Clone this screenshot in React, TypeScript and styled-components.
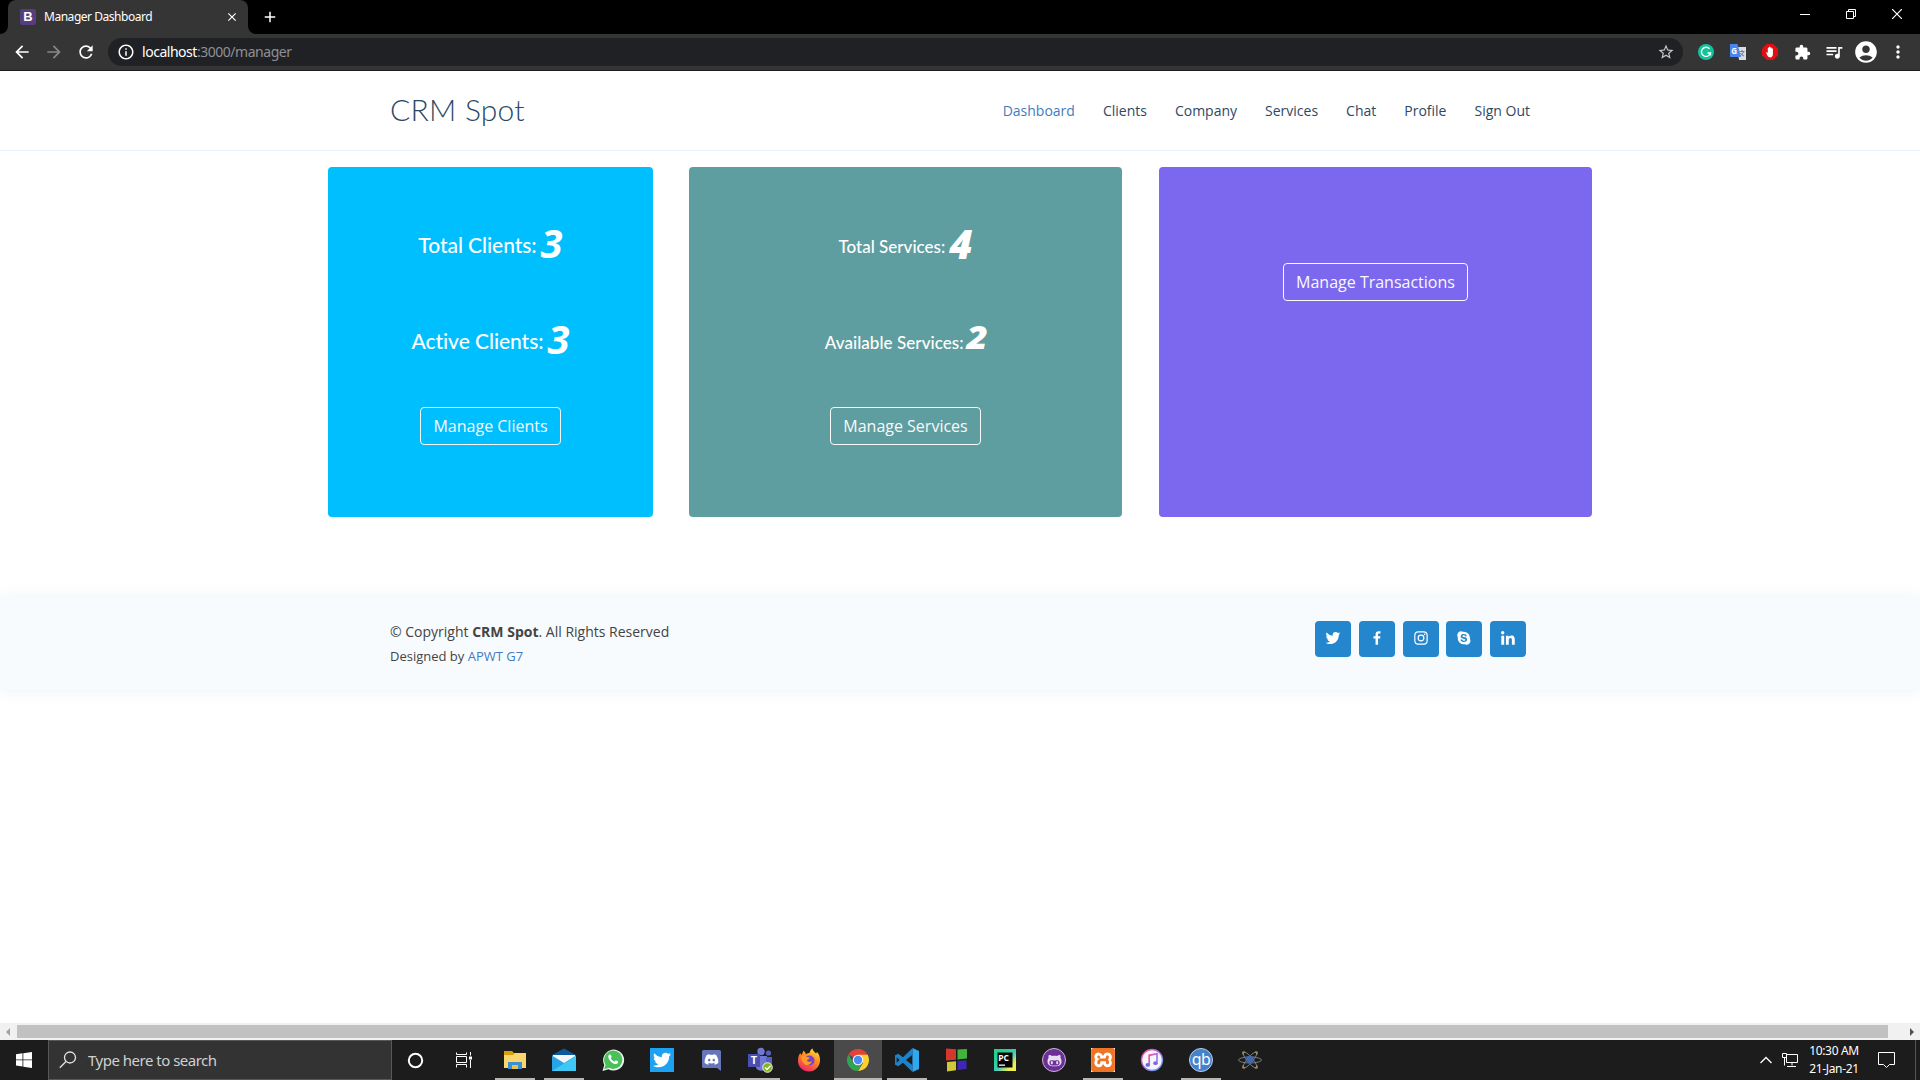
import React from "react";
import styled, { createGlobalStyle } from "styled-components";
import {
  MdArrowBack, MdArrowForward, MdRefresh, MdInfoOutline, MdStarBorder, MdExtension,
  MdQueueMusic, MdAccountCircle, MdMoreVert, MdClose, MdAdd,
} from "react-icons/md";
import { BiLogoTwitter, BiLogoFacebook, BiLogoInstagram, BiLogoSkype, BiLogoLinkedin } from "react-icons/bi";
import { FaTwitter, FaDiscord, FaGithubAlt } from "react-icons/fa";
import { SiXampp } from "react-icons/si";

const UI = `"Noto Sans", "Open Sans", sans-serif`;
const BODY = `"Open Sans", "Noto Sans", sans-serif`;
const HEAD = `Lato, "Open Sans", sans-serif`;

const Global = createGlobalStyle`
  * { box-sizing: border-box; }
  html, body { margin: 0; padding: 0; background: #fff; overflow: hidden; }
  a { text-decoration: none; color: inherit; }
  svg { display: block; flex: none; }
`;

const Screen = styled.div`
  width: 1920px; height: 1080px; display: flex; flex-direction: column; overflow: hidden;
  font-family: ${BODY}; color: #444;
`;

/* browser window */
const TabStrip = styled.div`
  height: 34px; flex: none; background: #000; display: flex; color: #fff; justify-content: space-between;
`;
const TabGroup = styled.div`display: flex; align-items: flex-end;`;
const TabFlare = styled.svg`width: 8px; height: 8px; fill: #353535;`;
const Tab = styled.div`
  width: 240px; height: 34px; background: #353535; border-radius: 8px 8px 0 0;
  display: flex; align-items: center; padding: 0 9px 0 12px;
`;
const Favicon = styled.span`
  width: 16px; height: 16px; border-radius: 2px; background: #563d7c; color: #fff;
  font: 700 13px/16px "Liberation Sans", sans-serif; text-align: center;
`;
const TabTitle = styled.span`
  flex: 1; margin-left: 8px; font: 400 12px/16px ${UI}; letter-spacing: -0.47px; white-space: nowrap;
`;
const NewTab = styled.div`height: 34px; display: flex; align-items: center; margin-left: 5px;`;
const WindowControls = styled.div`
  display: flex; align-items: center; gap: 36px; padding: 0 18px 6px 0;
`;
const Toolbar = styled.div`
  height: 37px; flex: none; background: #353535; border-bottom: 1px solid #1d1b1f;
  display: flex; align-items: center; padding: 0 12px; color: #fff;
`;
const NavButtons = styled.div`display: flex; gap: 12px; width: 96px;`;
const NavIcon = styled.span<{ $dim?: boolean }>`
  display: flex; font-size: 20px; color: ${(p) => (p.$dim ? "#888" : "#fff")};
`;
const Omnibox = styled.div`
  width: 1575px; height: 28px; border-radius: 14px; background: #202124; display: flex;
  align-items: center; padding: 0 8px 0 9px; font: 400 14px/20px ${UI};
`;
const Url = styled.span`
  flex: 1; margin-left: 7px; color: #8d9094; white-space: nowrap; letter-spacing: -0.47px;
  b { font-weight: 400; color: #fff; }
`;
const Extensions = styled.div`
  flex: 1; display: flex; justify-content: space-between; align-items: center; padding-left: 13px;
`;
const Slot = styled.span<{ $w?: number }>`
  width: ${(p) => p.$w ?? 20}px; height: 22px; display: flex; align-items: center; justify-content: center;
`;

/* page */
const Page = styled.main`flex: 1; display: flex; flex-direction: column; background: #fff;`;
const Header = styled.header`
  height: 80px; border-bottom: 1px solid #e6f1f8; display: flex; align-items: center;
  justify-content: space-between; padding: 0 390px;
`;
const Logo = styled.h1`
  margin: -3px 0 0; font: 300 30px/40px ${HEAD}; letter-spacing: 0.25px; color: #2c4964; white-space: nowrap;
`;
const Menu = styled.nav`display: flex; gap: 28px;`;
const MenuLink = styled.a<{ $active?: boolean }>`
  font-size: 14px; line-height: 20px; white-space: nowrap; color: ${(p) => (p.$active ? "#437bbf" : "#2c4964")};
`;
const Cards = styled.section`
  display: grid; grid-template-columns: 325px 434px 433px; column-gap: 36px; padding: 16px 328px 0;
`;
const Card = styled.article<{ $color: string; $width: number; $top: number }>`
  width: ${(p) => p.$width}px; height: 350px; border-radius: 4px; background: ${(p) => p.$color};
  padding-top: ${(p) => p.$top}px; display: flex; flex-direction: column; align-items: center; color: #fff;
`;
const Stat = styled.div<{ $size: number; $spacing: number; $drop?: number }>`
  height: 56px; margin-bottom: 40px; display: flex; align-items: center; white-space: nowrap;
  padding-top: ${(p) => (p.$drop ?? 0) * 2}px;
  font: 500 ${(p) => p.$size}px/52px ${HEAD}; letter-spacing: ${(p) => p.$spacing}px;
`;
const StatValue = styled.em<{ $size: number; $weight: number; $shift: number; $stretch?: number }>`
  margin-left: 4px; font: italic ${(p) => p.$weight} ${(p) => p.$size}px/52px ${BODY}; letter-spacing: 0;
  transform: translateY(${(p) => p.$shift}px) scaleX(${(p) => p.$stretch ?? 1});
`;
const CardButton = styled.a<{ $flush?: boolean }>`
  height: 38px; margin-top: ${(p) => (p.$flush ? 0 : -2)}px; border: 1px solid #f8f9fa; border-radius: 4px; padding: 0 12px;
  font-size: 16px; line-height: 36px; color: #f8f9fa; white-space: nowrap;
`;
const Footer = styled.footer`
  margin-top: 79px; height: 93px; background: #f7fbfe; box-shadow: 0 2px 15px rgba(44, 73, 100, 0.08);
  display: flex; justify-content: space-between; padding: 25px 393.8px 0 390px;
`;
const Legal = styled.div`font-size: 14px; line-height: 21px; white-space: nowrap;`;
const Credits = styled.div`
  padding-top: 4px; font-size: 13px; line-height: 20px;
  a { color: #437bbf; }
`;
const Socials = styled.div`display: flex; gap: 7.75px;`;
const Social = styled.a`
  width: 36px; height: 36px; border-radius: 4px; background: #2487ce; color: #fff; font-size: 18px;
  display: flex; align-items: center; justify-content: center; padding-bottom: 2px;
`;
const ScrollBar = styled.div`
  height: 17px; flex: none; background: #f1f1f1; display: flex; align-items: center; padding: 0 6px;
`;
const Thumb = styled.div`width: 1871px; height: 13px; background: #c1c1c1; margin: 0 22px 0 7px;`;

/* taskbar */
const Taskbar = styled.div`
  height: 40px; flex: none; background: #1d1c1c; display: flex; color: #fff; font-family: ${UI};
`;
const Start = styled.div`width: 48px; display: flex; align-items: center; justify-content: center;`;
const Search = styled.div`
  width: 344px; background: #333; border: 1px solid #585858; display: flex; align-items: center;
  padding-left: 10px; gap: 11px; font-size: 15px; letter-spacing: -0.5px; color: #d0d0d0; white-space: nowrap;
`;
const SystemButtons = styled.div`display: flex; width: 103px; align-items: center; padding-left: 15px; gap: 32px;`;
const Apps = styled.div`display: flex; flex: 1;`;
const AppButton = styled.div<{ $open?: boolean; $active?: boolean }>`
  width: ${(p) => (p.$active ? 48 : 40)}px; height: 40px; margin-right: ${(p) => (p.$active ? 5 : 9)}px;
  margin-left: ${(p) => (p.$active ? -4 : 0)}px;
  display: flex; align-items: center; justify-content: center; background: ${(p) => (p.$active ? "#4b4a4a" : "none")};
  border-bottom: 2px solid ${(p) => (p.$open ? "#b9b7b5" : "transparent")}; padding-top: 2px;
  background-clip: padding-box;
`;
const Tile = styled.span<{ $color: string; $round?: boolean; $ring?: string }>`
  width: 24px; height: 24px; display: flex; align-items: center; justify-content: center;
  background: ${(p) => p.$color}; border-radius: ${(p) => (p.$round ? "50%" : "0")};
  border: ${(p) => (p.$ring ? `1px solid ${p.$ring}` : "0")};
`;
const QbText = styled.span`font: 400 16px/20px ${UI}; letter-spacing: -0.6px; margin-top: -3px;`;
const Tray = styled.div`display: flex; align-items: center; padding-right: 4px;`;
const Clock = styled.div`
  width: 64px; text-align: center; font-size: 12px; line-height: 18px; letter-spacing: -0.35px; white-space: nowrap;
  margin: 0 12px 0 4px;
`;
const ShowDesktop = styled.div`width: 1px; height: 40px; background: #555; margin-left: 20px;`;

const S = (p: { w?: number; h?: number; box?: string; children: React.ReactNode }) => (
  <svg width={p.w ?? 24} height={p.h ?? 24} viewBox={p.box ?? "0 0 24 24"}>{p.children}</svg>
);

const Explorer = () => (
  <S>
    <path d="M1 3h8l2 2h11v5H1z" fill="#d99e0d" />
    <path d="M1 7h9l2-2h11v15H1z" fill="#fbd66c" />
    <path d="M5 21v-7h14v7h-4v-4H9v4z" fill="#3c8fd0" />
    <path d="M9 17h6v4H9z" fill="#e9bf54" />
  </S>
);
const Mail = () => (
  <S>
    <path d="M0 7L12 .5 24 7v5H0z" fill="#0e5a9e" />
    <path d="M1 7h22v9H1z" fill="#f4f6f8" />
    <path d="M0 7.500 12 15 24 7.500V23H0z" fill="#27a4e6" />
    <path d="M0 23 24 8v15z" fill="#3fc8f4" />
    <path d="M2 7.500h20L12 14z" fill="#f4f6f8" />
  </S>
);
const WhatsApp = () => (
  <S>
    <path d="M1.500 23l1.800-6A10.500 10.500 0 1 1 7.500 21.300z" fill="#f1f3f1" />
    <circle cx="12.200" cy="11.800" r="9.200" fill="#48c159" />
    <path d="M3.200 21.300l1.500-5 3.500 3.500z" fill="#48c159" />
    <path d="M8.500 6.500c-2 1-1.300 4 .8 6.400 2.300 2.600 6 4.500 7.600 2.100.8-1.300.1-1.600-1.700-2.400-1.200-.5-1.200 1.300-2.200.9-1.500-.6-2.500-1.700-3.200-2.900-.4-.8 1.200-1 .7-2.200-.5-1.300-.8-2.300-2-1.900z" fill="#fff" />
  </S>
);
const Discord = () => (
  <S>
    <path d="M4.500 2h16A1.500 1.500 0 0 1 22 3.500V23l-4-3H4.500A1.500 1.500 0 0 1 3 18.500v-15A1.500 1.500 0 0 1 4.500 2z" fill="#6676b8" />
    <FaDiscord x={5} y={4} width={15} height={15} size={15} color="#fff" />
  </S>
);
const Teams = () => (
  <S w={26} h={26} box="0 0 26 26">
    <circle cx="14" cy="4.500" r="3.700" fill="#7078d2" />
    <circle cx="21.500" cy="6" r="2.600" fill="#5860be" />
    <path d="M9 9h11v9a6 6 0 0 1-11 3z" fill="#7078d2" />
    <path d="M19 10h6v7a4 4 0 0 1-6 3z" fill="#5860be" />
    <path d="M1 7h12v13H1z" fill="#4a50b0" />
    <text x="7" y="17.300" fontSize="11" fontWeight="700" fill="#fff" textAnchor="middle" fontFamily="Open Sans">T</text>
    <circle cx="20.500" cy="20.500" r="4.800" fill="#81b71a" stroke="#f2f2f2" />
    <path d="M18 20.500l2 2 3.500-3.800" fill="none" stroke="#fff" strokeWidth="1.400" />
  </S>
);
const Firefox = () => (
  <S>
    <defs>
      <linearGradient id="ff" x1="0.8" y1="0" x2="0.3" y2="1">
        <stop offset="0" stopColor="#ffe23c" /><stop offset=".45" stopColor="#ff8a1f" /><stop offset="1" stopColor="#f0236b" />
      </linearGradient>
    </defs>
    <path d="M12.500 5C13 2.500 14.500 1 15.500.5c.3 2.500 2 3 3.500 5 .6-.3.800-1.200.8-1.800C22 6 23.300 9 23 13c-.6 6-5 10.500-11 10.500S1 19 1 13c0-4 1-6.500 2.500-8 .1 1 .4 1.500.8 2C5.500 5.700 6 4 6.300 2.800 8 4 8.500 5 9 6.200c1-.7 2.300-1.100 3.500-1.200z" fill="url(#ff)" />
    <circle cx="12.500" cy="12.500" r="5" fill="#7542d5" />
    <path d="M4.500 8.500c2-1.500 4-.6 5 .4 1.500 0 3 .2 3 1.100 0 1.200-2 1.200-2.500 2.500.4 1.600 3 2 5 .6-1 3.700-4.500 4.700-7 3.400C5.500 15 4 12 4.500 8.500z" fill="#ff9a22" />
  </S>
);
const Chrome = () => (
  <S>
    <path d="M12 12 2.470 6.500A11 11 0 0 1 21.530 6.500z" fill="#e24336" />
    <path d="M12 6.800h9.700A11 11 0 0 1 12 23l5-8z" fill="#fdd02f" />
    <path d="M2.470 6.500A11 11 0 0 0 12 23l4.500-8H7.500z" fill="#31a352" />
    <circle cx="12" cy="12" r="5.300" fill="#f5f5f5" />
    <circle cx="12" cy="12" r="4.200" fill="#4a8af4" />
  </S>
);
const VsCode = () => (
  <S>
    <path d="M17.500 0 8 9.300 3.300 5.700 0 7.300v9.400l3.300 1.600L8 14.700l9.500 9.300z" fill="#1d82c8" />
    <path d="M1.700 9.200v5.600L4.600 12zM17.500 6.800 11 12l6.500 5.200z" fill="#1d1c1c" />
    <path d="M17.500 0 24 3v18l-6.500 3z" fill="#2fa8ef" />
  </S>
);
const Blocks = () => (
  <S>
    <path d="M2 .5l10 .8v10.500L2 12.500z" fill="#d3382f" /><path d="M13.500 1.500 23 1v9.500l-9.500 1z" fill="#41b539" />
    <path d="M3 14l9-.7v9L3 23.500z" fill="#cfc837" /><path d="M13.500 13l9-.8v8.800l-9 1z" fill="#3d26b8" />
  </S>
);
const PyCharm = () => (
  <S>
    <defs><linearGradient id="pc" x1="0" y1="0" x2="1" y2="1"><stop offset=".25" stopColor="#27d08c" /><stop offset=".55" stopColor="#49c6bd" /><stop offset=".8" stopColor="#eff04e" /></linearGradient></defs>
    <path d="M1 1h22v22H1z" fill="url(#pc)" />
    <path d="M4.500 4.500h15v15h-15z" fill="#050505" />
    <text x="5.200" y="12.500" fontSize="8.500" fontWeight="700" fill="#fff" fontFamily="Open Sans">PC</text>
    <path d="M6 16.500h6v1.300H6z" fill="#fff" />
  </S>
);
const ITunes = () => (
  <S>
    <defs><linearGradient id="it" x1="0" y1="0" x2="1" y2="1"><stop offset="0" stopColor="#f0508c" /><stop offset=".5" stopColor="#b268e8" /><stop offset="1" stopColor="#48b7f0" /></linearGradient></defs>
    <circle cx="12" cy="12" r="10.500" fill="#f6f4fb" stroke="url(#it)" strokeWidth="1.300" />
    <path d="M9.200 16.500V7.300L17 5.700v8.900" fill="none" stroke="url(#it)" strokeWidth="1.700" />
    <ellipse cx="7.800" cy="16.900" rx="2.300" ry="1.900" fill="#5a6ee8" /><ellipse cx="15.500" cy="15.200" rx="2.300" ry="1.900" fill="#8c62e4" />
  </S>
);
const Atom = () => (
  <S>
    <g fill="none" stroke="#8d9091" strokeWidth=".8">
      <ellipse cx="12" cy="12" rx="11.500" ry="3" />
      <ellipse cx="12" cy="12" rx="10" ry="2.800" transform="rotate(50 12 12)" />
      <ellipse cx="12" cy="12" rx="10" ry="2.800" transform="rotate(-50 12 12)" />
    </g>
    <path d="M6.500 8.500h11L12 17z" fill="#365a9c" /><circle cx="12" cy="11.500" r="3.800" fill="#4469ab" />
    <path d="M5 6.500V4h2M17 4h2v2.500M5 17.500V20h2M17 20h2v-2.500" fill="none" stroke="#b3a06a" strokeWidth="1.200" />
  </S>
);

const apps: { icon: React.ReactNode; open?: boolean; active?: boolean }[] = [
  { icon: <Explorer />, open: true },
  { icon: <Mail />, open: true },
  { icon: <WhatsApp /> },
  { icon: <Tile $color="#1da1f2"><FaTwitter size={18} /></Tile> },
  { icon: <Discord /> },
  { icon: <Teams />, open: true },
  { icon: <Firefox /> },
  { icon: <Chrome />, open: true, active: true },
  { icon: <VsCode />, open: true },
  { icon: <Blocks /> },
  { icon: <PyCharm /> },
  { icon: <Tile $color="#6b2f96" $round $ring="#cbb6dc"><FaGithubAlt size={15} color="#e8dcf2" /></Tile> },
  { icon: <Tile $color="#fff"><SiXampp size={24} color="#ef7423" /></Tile>, open: true },
  { icon: <ITunes /> },
  { icon: <Tile $color="#4681cb" $round $ring="#b6cdec"><QbText>qb</QbText></Tile>, open: true },
  { icon: <Atom /> },
];

const menu = ["Dashboard", "Clients", "Company", "Services", "Chat", "Profile", "Sign Out"];
const socials = [BiLogoTwitter, BiLogoFacebook, BiLogoInstagram, BiLogoSkype, BiLogoLinkedin];

function Browser() {
  return (
    <>
      <TabStrip>
        <TabGroup>
          <TabFlare viewBox="0 0 8 8"><path d="M8 0v8H0a8 8 0 0 0 8-8z" /></TabFlare>
          <Tab>
            <Favicon>B</Favicon>
            <TabTitle>Manager Dashboard</TabTitle>
            <MdClose size={14} />
          </Tab>
          <TabFlare viewBox="0 0 8 8"><path d="M0 0v8h8a8 8 0 0 1-8-8z" /></TabFlare>
          <NewTab><MdAdd size={18} /></NewTab>
        </TabGroup>
        <WindowControls>
          <S w={10} h={10} box="0 0 10 10"><path d="M0 5.500h10" stroke="#fff" /></S>
          <S w={10} h={10} box="0 0 10 10"><path d="M.5 2.500h7v7h-7zM2.500 2.500v-2h7v7h-2" fill="none" stroke="#fff" /></S>
          <S w={10} h={10} box="0 0 10 10"><path d="M0 0l10 10M10 0L0 10" stroke="#fff" strokeWidth="1.200" /></S>
        </WindowControls>
      </TabStrip>
      <Toolbar>
        <NavButtons>
          <NavIcon><MdArrowBack /></NavIcon>
          <NavIcon $dim><MdArrowForward /></NavIcon>
          <NavIcon><MdRefresh /></NavIcon>
        </NavButtons>
        <Omnibox>
          <MdInfoOutline size={18} />
          <Url><b>localhost</b>:3000/manager</Url>
          <MdStarBorder size={18} color="#c4c7cb" />
        </Omnibox>
        <Extensions>
          <Slot>
            <S w={16} h={16} box="0 0 16 16">
              <circle cx="8" cy="8" r="8" fill="#15c39a" />
              <path d="M11.500 4.800A4.600 4.600 0 1 0 12.500 9H9.500M12.500 9v2.500" fill="none" stroke="#fff" strokeWidth="1.300" />
            </S>
          </Slot>
          <Slot>
            <S w={16} h={16} box="0 0 16 16">
              <path d="M7 3h9v13H9z" fill="#d9dce0" />
              <path d="M9.500 7.500h5M12 6v1.500M13.500 7.500c-.5 2-1.800 3.500-3.500 4.500M10.500 9c.8 1.500 2 2.500 3.500 3" fill="none" stroke="#6f7f95" />
              <path d="M0 0h7.500L11 13H0z" fill="#4a86ee" />
              <text x="1.300" y="9.500" fontSize="8" fontWeight="700" fill="#fff" fontFamily="Open Sans">G</text>
            </S>
          </Slot>
          <Slot>
            <S w={16} h={16} box="0 0 16 16">
              <path d="M4.700 0h6.600L16 4.700v6.600L11.300 16H4.700L0 11.300V4.700z" fill="#e40d13" />
              <path d="M4.200 8.600c.8-.6 1.300.1 1.600.6V4.200c0-.9 1.200-.9 1.200 0V3.200c0-.9 1.200-.9 1.200 0v.6c0-.9 1.300-.9 1.300 0v1c0-.8 1.400-.8 1.400 0V10c0 2-1 3.500-2.700 3.500-2.100 0-3-1.500-4-4.900z" fill="#fff" />
            </S>
          </Slot>
          <Slot><MdExtension size={17} /></Slot>
          <Slot><MdQueueMusic size={20} /></Slot>
          <Slot><MdAccountCircle size={26} /></Slot>
          <Slot><MdMoreVert size={20} /></Slot>
        </Extensions>
      </Toolbar>
    </>
  );
}

export default function App() {
  return (
    <Screen>
      <Global />
      <Browser />
      <Page>
        <Header>
          <Logo>CRM Spot</Logo>
          <Menu>{menu.map((m, i) => <MenuLink key={m} $active={i === 0}>{m}</MenuLink>)}</Menu>
        </Header>
        <Cards>
          <Card $color="#00bfff" $width={325} $top={50}>
            <Stat $size={21} $spacing={-0.05}>Total Clients:<StatValue $size={40} $weight={700} $shift={-2}>3</StatValue></Stat>
            <Stat $size={21} $spacing={-0.05}>Active Clients:<StatValue $size={40} $weight={700} $shift={-2}>3</StatValue></Stat>
            <CardButton>Manage Clients</CardButton>
          </Card>
          <Card $color="#5f9ea0" $width={433} $top={50}>
            <Stat $size={17} $spacing={0} $drop={2}>Total Services:<StatValue $size={40} $weight={800} $shift={-3}>4</StatValue></Stat>
            <Stat $size={17} $spacing={0.06} $drop={2}>Available Services:<StatValue $size={32} $weight={800} $shift={-6} $stretch={1.15}>2</StatValue></Stat>
            <CardButton>Manage Services</CardButton>
          </Card>
          <Card $color="#7b68ee" $width={433} $top={96}>
            <CardButton $flush>Manage Transactions</CardButton>
          </Card>
        </Cards>
        <Footer>
          <Legal>
            <div>© Copyright <strong>CRM Spot</strong>. All Rights Reserved</div>
            <Credits>Designed by <a>APWT G7</a></Credits>
          </Legal>
          <Socials>{socials.map((Icon, i) => <Social key={i}><Icon /></Social>)}</Socials>
        </Footer>
      </Page>
      <ScrollBar>
        <S w={4} h={8} box="0 0 4 8"><path d="M4 0v8L0 4z" fill="#a3a3a3" /></S>
        <Thumb />
        <S w={4} h={8} box="0 0 4 8"><path d="M0 0v8l4-4z" fill="#505050" /></S>
      </ScrollBar>
      <Taskbar>
        <Start>
          <S w={16} h={16} box="0 0 16 16"><path d="M0 2.200 6.500 1.300v6.200H0zM7.300 1.200 16 0v7.500H7.300zM0 8.300h6.500v6.200L0 13.600zM7.300 8.300H16V16l-8.700-1.200z" fill="#fff" /></S>
        </Start>
        <Search>
          <S w={18} h={18} box="0 0 18 18"><circle cx="11" cy="6.500" r="5.500" fill="none" stroke="#e4e4e4" strokeWidth="1.300" /><path d="M7 10.500.8 16.700" stroke="#e4e4e4" strokeWidth="1.300" /></S>
          Type here to search
        </Search>
        <SystemButtons>
          <S w={17} h={17} box="0 0 17 17"><circle cx="8.500" cy="8.500" r="6.700" fill="none" stroke="#fff" strokeWidth="2" /></S>
          <S w={16} h={16} box="0 0 16 16"><path d="M.5.5v2h10v-2M.5 15.500v-3h10v3M.5 4.500h10v6H.5zM14.500 0v3.500M14.500 8v8" fill="none" stroke="#fff" /><path d="M13 4.500h3v3h-3z" fill="#fff" /></S>
        </SystemButtons>
        <Apps>
          {apps.map((a, i) => <AppButton key={i} $open={a.open} $active={a.active}>{a.icon}</AppButton>)}
        </Apps>
        <Tray>
          <S w={12} h={8} box="0 0 12 8"><path d="M.5 7 6 1.500 11.500 7" fill="none" stroke="#fff" strokeWidth="1.300" /></S>
          <Slot $w={10} />
          <S w={16} h={14} box="0 0 16 14"><path d="M4.500 1.500h11v8h-11zM.5.5h4v4h-4zM2.500 4.500v8M10 9.500v3M5 13.500h9" fill="none" stroke="#fff" /></S>
          <Clock>10:30 AM<br />21-Jan-21</Clock>
          <S w={17} h={16} box="0 0 17 16"><path d="M.5.5h16v12h-5l-3 3-3-3h-5z" fill="none" stroke="#fff" /></S>
          <ShowDesktop />
        </Tray>
      </Taskbar>
    </Screen>
  );
}
